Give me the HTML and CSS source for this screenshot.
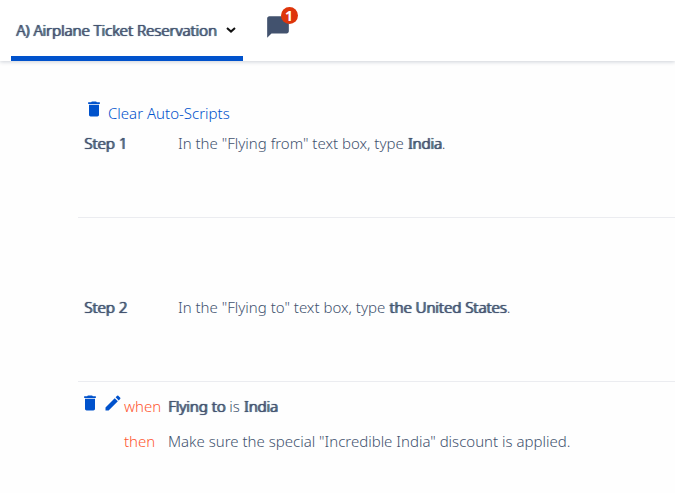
FILE: index.html
```html
<!DOCTYPE html>
<html lang="en">
  <head>
    <meta charset="utf-8">
    <title>Airplane Ticket Reservation</title>
    <link rel="stylesheet" href="styles.css">
  </head>
  <body>
    <svg class="sprite">
      <symbol id="trash" viewBox="0 0 24 24"><path d="M6 19c0 1.1.9 2 2 2h8c1.1 0 2-.9 2-2V7H6v12zM19 4h-3.5l-1-1h-5l-1 1H5v2h14V4z"/></symbol>
      <symbol id="pencil" viewBox="0 0 24 24"><path d="M3 17.25V21h3.75L17.81 9.94l-3.75-3.75L3 17.25zM20.71 7.04c.39-.39.39-1.02 0-1.41l-2.34-2.34a1 1 0 0 0-1.41 0l-1.83 1.83 3.75 3.75 1.83-1.83z"/></symbol>
    </svg>
    <header>
      <button class="tab">
        A) Airplane Ticket Reservation
        <svg class="chevron" viewBox="0 0 10 6"><path d="M1 1l4 3.6L9 1"/></svg>
      </button>
      <button class="comments" aria-label="1 comment">
        <svg viewBox="0 0 24 24"><path d="M20 2H4c-1.1 0-2 .9-2 2v18l4-4h14c1.1 0 2-.9 2-2V4c0-1.1-.9-2-2-2z"/></svg>
        <span class="badge">1</span>
      </button>
    </header>
    <main>
      <section class="step">
        <a href="#" class="clear"><svg class="icon"><use href="#trash"/></svg>Clear Auto-Scripts</a>
        <div class="row">
          <b>Step 1</b>
          <span>In the "Flying from" text box, type <b>India</b>.</span>
        </div>
      </section>
      <section class="step second">
        <div class="row">
          <b>Step 2</b>
          <span>In the "Flying to" text box, type <b>the United States</b>.</span>
        </div>
      </section>
      <section class="rule">
        <div class="actions">
          <button aria-label="Delete rule"><svg class="icon"><use href="#trash"/></svg></button>
          <button aria-label="Edit rule"><svg class="icon"><use href="#pencil"/></svg></button>
        </div>
        <dl>
          <dt>when</dt>
          <dd><b>Flying to</b> is <b>India</b></dd>
          <dt>then</dt>
          <dd>Make sure the special "Incredible India" discount is applied.</dd>
        </dl>
      </section>
    </main>
  </body>
</html>
```

FILE: styles.css
```css
* {
  box-sizing: border-box;
}
body {
  margin: 0;
  background: #fefefe;
  color: #42526e;
  font: 300 15px/20px "Noto Sans", sans-serif;
}
/* light weight, thickened with a shadow */
b, .tab {
  font-weight: 300;
  text-shadow: 1px 0 currentColor, 0 0 1px currentColor;
}
button {
  margin: 0;
  padding: 0;
  border: 0;
  background: none;
  color: inherit;
  font: inherit;
  cursor: pointer;
}
svg {
  display: block;
}
.sprite {
  display: none;
}

header {
  display: flex;
  align-items: stretch;
  height: 61px;
  padding-left: 11px;
  background: white;
  box-shadow: 0 1px 4px rgba(9, 30, 66, .2);
}
.tab {
  display: flex;
  align-items: center;
  gap: 9px;
  padding: 3px 7px 0 5px;
  border-bottom: 5px solid #0052cc;
  border-radius: 2px 2px 0 0;
}
.chevron {
  width: 10px;
  height: 6px;
  fill: none;
  stroke: #111;
  stroke-width: 2;
}
.comments {
  position: relative;
  align-self: flex-start;
  margin: 14px 0 0 22px;
}
.comments svg {
  width: 26px;
  height: 26px;
  fill: #42526e;
}
.badge {
  position: absolute;
  top: -7px;
  right: -7px;
  width: 17px;
  height: 17px;
  border-radius: 50%;
  background: #de350b;
  color: white;
  font-size: 14px;
  font-weight: 700;
  line-height: 17px;
  text-align: center;
}

main {
  padding: 38px 0 32px 78px;
}
.icon {
  width: 20px;
  height: 20px;
  fill: #0052cc;
}
.clear {
  display: flex;
  gap: 4px;
  padding-left: 6px;
  line-height: 28px;
  color: #0052cc;
  text-decoration: none;
}
.step {
  height: 119px;
  border-bottom: 1px solid #ebecf0;
}
.row {
  display: grid;
  grid-template-columns: 94px 1fr;
  padding: 6px 0 0 6px;
}
.second {
  height: 164px;
  padding-top: 73px;
}
.rule {
  display: flex;
  align-items: flex-start;
  padding-top: 11px;
}
.actions {
  display: flex;
  gap: 3px;
  width: 46px;
  padding-left: 2px;
}
dl {
  display: grid;
  grid-template-columns: 44px 1fr;
  row-gap: 15px;
  margin: 3px 0 0;
}
dt {
  color: #ff5630;
}
dd {
  margin: 0;
}
```
